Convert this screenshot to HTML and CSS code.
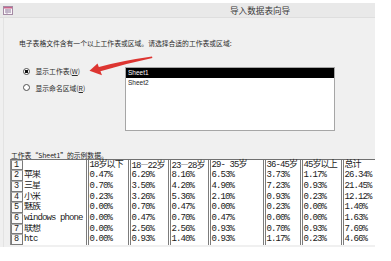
FILE: index.html
```html
<html lang="zh-CN">

<head>
    <meta charset="utf-8">
    <link rel="stylesheet" href="styles.css">
</head>

<body>
    <div class="window">
        <div class="titlebar">
            <svg class="app-icon" width="10" height="9" viewBox="0 0 10 9">
                <rect x="0.5" y="0.5" width="9" height="8" fill="#fbf6fa" stroke="#a48aa4" />
                <rect x="1" y="1" width="8" height="1.5" fill="#c9648a" />
                <line x1="2" y1="4" x2="8" y2="4" stroke="#8d7a9a" />
                <line x1="2" y1="6" x2="8" y2="6" stroke="#8d7a9a" />
                <line x1="4" y1="3" x2="4" y2="8" stroke="#b9a9c2" />
            </svg>
            <span class="title">导入数据表向导</span>
        </div>
        <div class="panel">
            <p class="prompt">电子表格文件含有一个以上工作表或区域。请选择合适的工作表或区域:</p>
            <div class="chooser">
                <div class="radios">
                    <label class="radio checked"><span class="dot"></span>显示工作表(<u>W</u>)</label>
                    <label class="radio"><span class="dot"></span>显示命名区域(<u>R</u>)</label>
                </div>
                <ul class="sheet-list">
                    <li class="selected">Sheet1</li>
                    <li>Sheet2</li>
                </ul>
            </div>
            <p class="caption">工作表“Sheet1”的示例数据。</p>
        </div>
        <div class="sheet" id="sheet"></div>
        <svg class="arrow" width="72" height="28" viewBox="0 0 72 28">
            <path d="M14 15.2 Q40 8.5 68 4.6 L68.4 6 Q42 11.5 15.5 19.6 Z" fill="#dd3531" />
            <path d="M5.5 18.8 L13.5 11.6 L18 23.2 Z" fill="#dd3531" />
        </svg>
    </div>
    <script>
    var head = ['', '18岁以下', '18<span class="wide">—</span>22岁', '23<span class="wide">—</span>28岁', '29- 35岁', '36-45岁', '45岁以上', '总计'];
    var rows = [
        ['苹果', '0.47%', '6.29%', '8.16%', '6.53%', '3.73%', '1.17%', '26.34%'],
        ['三星', '0.70%', '3.50%', '4.20%', '4.90%', '7.23%', '0.93%', '21.45%'],
        ['小米', '0.23%', '3.26%', '5.36%', '2.10%', '0.93%', '0.23%', '12.12%'],
        ['魅族', '0.00%', '0.70%', '0.47%', '0.00%', '0.23%', '0.00%', '1.40%'],
        ['windows phone', '0.00%', '0.47%', '0.70%', '0.47%', '0.00%', '0.00%', '1.63%'],
        ['联想', '0.00%', '2.56%', '2.56%', '0.93%', '0.70%', '0.93%', '7.69%'],
        ['htc', '0.00%', '0.93%', '1.40%', '0.93%', '1.17%', '0.23%', '4.66%']
    ];
    var html = '';
    [head].concat(rows).forEach(function(row, i) {
        html += '<div class="num">' + (i + 1) + '</div>';
        row.forEach(function(cell, j) {
            html += '<div class="' + (j == 0 ? 'name' : 'val') + '">' + cell + '</div>';
        });
    });
    document.getElementById('sheet').innerHTML = html;
    </script>
</body>

</html>
```

FILE: styles.css
```css
body {
    margin: 0;
    background: #fff;
    font-family: "Noto Sans CJK SC", "Noto Sans", sans-serif;
    color: #2a2a2a;
}

.window {
    position: relative;
    margin-top: 3px;
    width: 375px;
    height: 244px;
    overflow: hidden;
    background: linear-gradient(to right, #f0f0f0 3px, #e3e3e3 3px, #e3e3e3 4px, #f0f0f0 4px);
}

.titlebar {
    display: flex;
    align-items: center;
    height: 14px;
    background: #e9e9e9;
    border-bottom: 1px solid #dedede;
}

.app-icon {
    margin-left: 3px;
}

.title {
    margin-left: 217px;
    font-size: 8.6px;
    line-height: 14px;
    color: #3a3a3a;
}

.panel {
    padding-top: 21px;
}

.prompt {
    margin: 0 0 0 19px;
    font-size: 6.8px;
    line-height: 9px;
}

.chooser {
    display: flex;
    margin-top: 18.5px;
}

.radios {
    display: flex;
    flex-direction: column;
    gap: 7.5px;
    width: 102px;
    margin-left: 23px;
}

.radio {
    display: flex;
    align-items: center;
    height: 9px;
    font-size: 6.8px;
}

.dot {
    width: 7px;
    height: 7px;
    margin-right: 5.5px;
    box-sizing: border-box;
    border: 1px solid #505050;
    border-radius: 50%;
    background: #fff;
}

.checked .dot {
    background: radial-gradient(circle, #111 1.6px, #fff 1.8px);
}

.sheet-list {
    width: 210px;
    height: 64px;
    margin: 0;
    padding: 0;
    box-sizing: border-box;
    list-style: none;
    background: #fff;
    border: 1px solid #a6a6a6;
    font-family: "Liberation Sans", sans-serif;
    font-size: 6.5px;
}

.sheet-list li {
    height: 10px;
    line-height: 10px;
    padding-left: 2px;
    color: #222;
}

.sheet-list .selected {
    background: #000;
    color: #fff;
}

.caption {
    margin: 20px 0 0 11px;
    font-size: 6.8px;
    line-height: 8px;
    color: #222;
}

.sheet {
    display: grid;
    grid-template-columns: 12px 63px 42px 40px 40px 55px 37px 41px 35px;
    grid-auto-rows: 10.7px;
    margin-left: 10px;
    width: 365px;
    background: #fff;
    border-top: 1px solid #707070;
    border-left: 1px solid #8a8a8a;
    box-sizing: border-box;
    font-family: "Liberation Mono", "Noto Sans CJK SC", monospace;
    font-size: 9px;
    letter-spacing: -0.9px;
    line-height: 10.7px;
    color: #1a1a1a;
    white-space: pre;
}

.sheet .wide {
    font-family: "Noto Sans CJK SC", sans-serif;
    font-size: 8px;
    letter-spacing: -1px;
}

.num {
    box-sizing: border-box;
    border: 1px solid #7a7a7a;
    border-top-color: #b0b0b0;
    background: #fafafa;
    padding-left: 2px;
    font-size: 8.5px;
    line-height: 9px;
}

.name {
    padding-left: 1px;
    overflow: hidden;
}

.val {
    border-left: 3px double #7c7c7c;
    padding-left: 0.5px;
}

.arrow {
    position: absolute;
    left: 84px;
    top: 49px;
}
```
